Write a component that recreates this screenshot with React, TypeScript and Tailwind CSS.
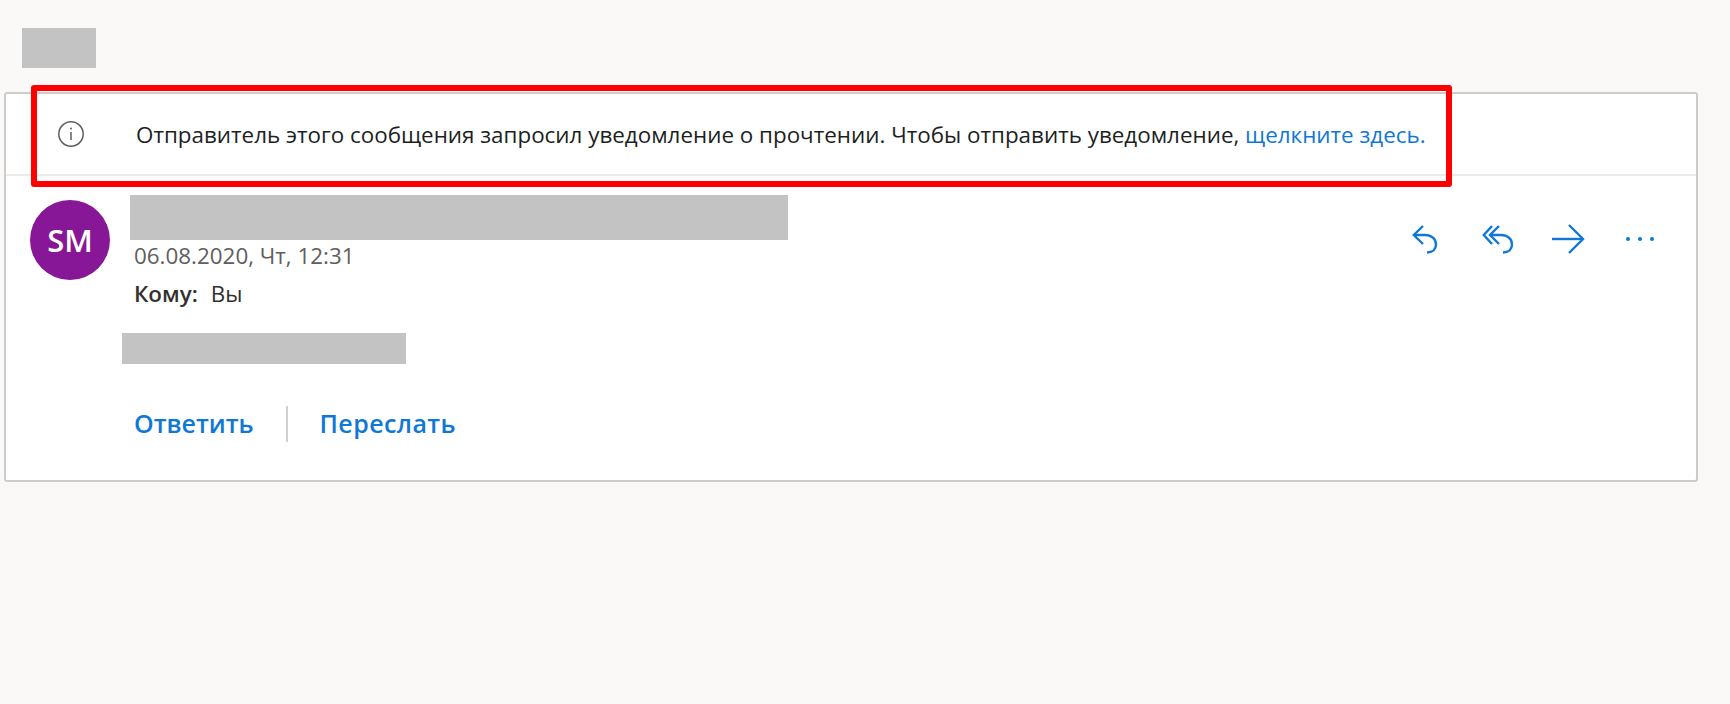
const font = "font-['Open_Sans',sans-serif]";

function ReplyIcon() {
  return (
    <svg width="26" height="30" viewBox="0 0 26 30" fill="none" stroke="#0f78d4" strokeWidth="2.4">
      <path d="M11 2 L1.8 11 L11 20" />
      <path d="M1.8 11 H13 C19.5 11 24 15 24 20.5 C24 25.5 20.5 28.5 15 28.5" />
    </svg>
  );
}

function ReplyAllIcon() {
  return (
    <svg width="32" height="30" viewBox="0 0 32 30" fill="none" stroke="#0f78d4" strokeWidth="2.4">
      <path d="M10 2 L1.8 11 L10 20" />
      <path d="M17 2 L8 11 L17 20" />
      <path d="M8 11 H19 C25.5 11 30 15 30 20.5 C30 25.5 26.5 28.5 21 28.5" />
    </svg>
  );
}

function ForwardIcon() {
  return (
    <svg width="33" height="30" viewBox="0 0 33 30" fill="none" stroke="#0f78d4" strokeWidth="2.4">
      <path d="M0 15 H31" />
      <path d="M17 1 L31 15 L17 29" />
    </svg>
  );
}

function MoreIcon() {
  return (
    <svg width="30" height="6" viewBox="0 0 30 6" fill="#0f78d4">
      <circle cx="3" cy="3" r="2" />
      <circle cx="15" cy="3" r="2" />
      <circle cx="27" cy="3" r="2" />
    </svg>
  );
}

export default function App() {
  return (
    <div className={`relative h-[704px] w-[1730px] overflow-hidden bg-[#faf9f8] pt-[28px] ${font}`}>
      <div className="ml-[22px] h-[40px] w-[74px] bg-[#c3c3c3]" />

      <div className="mt-[24px] ml-[4px] h-[390px] w-[1694px] rounded-[3px] border-2 border-[#cdcccb] bg-white">
        <div className="flex h-[82px] items-center border-b-2 border-[#edebe9]">
          <svg className="ml-[51px]" width="28" height="28" viewBox="0 0 28 28" fill="none">
            <circle cx="14" cy="14" r="12.2" stroke="#605e5c" strokeWidth="1.5" />
            <path d="M14 12 V20" stroke="#605e5c" strokeWidth="1.5" />
            <circle cx="14" cy="8.5" r="1" fill="#605e5c" />
          </svg>
          <p className="mt-[2px] ml-[51px] text-[22.4px] whitespace-nowrap text-[#201f1e]">
            Отправитель этого сообщения запросил уведомление о прочтении. Чтобы отправить уведомление,{" "}
            <span className="text-[#0f78d4]">щелкните здесь.</span>
          </p>
        </div>

        <div className="flex pt-[19px]">
          <div className="mt-[5px] ml-[24px] flex h-[80px] w-[80px] items-center justify-center rounded-full bg-[#881798] text-[31px] font-semibold text-white">
            SM
          </div>
          <div className="ml-[20px] flex-1">
            <div className="h-[45px] w-[658px] bg-[#c3c3c3]" />
            <p className="mt-[1px] ml-[4px] text-[22.4px] leading-[30px] text-[#605e5c]">06.08.2020, Чт, 12:31</p>
            <p className="mt-[8px] ml-[4px] flex gap-[13px] text-[22.4px] leading-[30px] text-[#323130]">
              <span className="font-semibold">Кому:</span>
              <span>Вы</span>
            </p>
          </div>
          <div className="mt-[28px] mr-[41px] flex h-[32px] items-center">
            <ReplyIcon />
            <div className="ml-[44px]">
              <ReplyAllIcon />
            </div>
            <div className="ml-[38px]">
              <ForwardIcon />
            </div>
            <div className="ml-[40px]">
              <MoreIcon />
            </div>
          </div>
        </div>

        <div className="mt-[24px] ml-[116px] h-[31px] w-[284px] bg-[#c3c3c3]" />

        <div className="mt-[41px] ml-[128px] flex items-center text-[25px] font-semibold text-[#0f78d4]">
          <span>Ответить</span>
          <div className="mx-[32px] h-[36px] w-[2px] bg-[#d2d0ce]" />
          <span className="tracking-[0.4px]">Переслать</span>
        </div>
      </div>

      <div className="absolute top-[85px] left-[31px] h-[102px] w-[1421px] rounded-[3px] border-[6px] border-[#ff0000]" />
    </div>
  );
}
